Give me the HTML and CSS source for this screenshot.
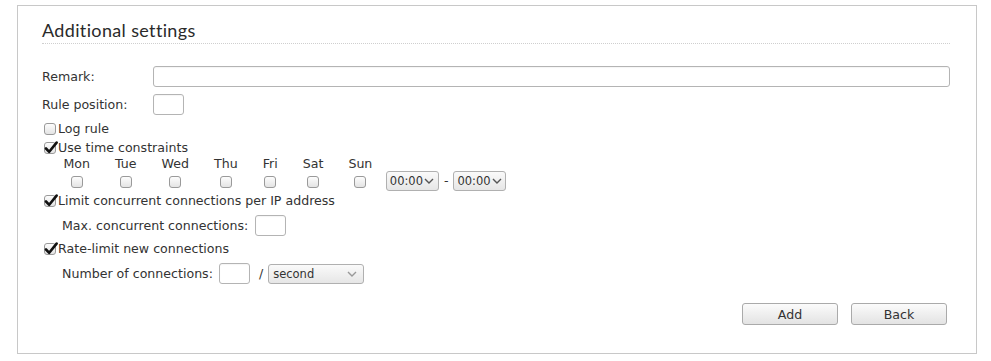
FILE: index.html
```html
<!DOCTYPE html>
<html>
<head>
<meta charset="utf-8">
<link rel="stylesheet" href="styles.css">
</head>
<body>
<div class="panel">
  <h2 class="title">Additional settings</h2>
  <div class="row field">
    <label class="lbl">Remark:</label>
    <input class="txt wide" type="text">
  </div>
  <div class="row field">
    <label class="lbl">Rule position:</label>
    <input class="txt small" type="text">
  </div>
  <div class="row check">
    <span class="cb"></span><span>Log rule</span>
  </div>
  <div class="row check">
    <span class="cb on"><svg viewBox="0 0 14 14" width="14" height="14"><path d="M2 7.5 L5.2 10.8 L12.6 1.6" fill="none" stroke="#111" stroke-width="2.6" stroke-linecap="round" stroke-linejoin="round"/></svg></span><span>Use time constraints</span>
  </div>
  <div class="days">
    <table class="daytable">
      <tr class="dnames"><td>Mon</td><td>Tue</td><td>Wed</td><td>Thu</td><td>Fri</td><td>Sat</td><td>Sun</td><td></td></tr>
      <tr class="dboxes">
        <td><span class="cb"></span></td>
        <td><span class="cb"></span></td>
        <td><span class="cb"></span></td>
        <td><span class="cb"></span></td>
        <td><span class="cb"></span></td>
        <td><span class="cb"></span></td>
        <td><span class="cb"></span></td>
        <td class="times">
          <span class="sel time">00:00<svg class="chev" viewBox="0 0 10 6" width="10" height="6"><path d="M1 1 L5 5 L9 1" fill="none" stroke="#555" stroke-width="1.4"/></svg></span>
          <span class="dash">-</span>
          <span class="sel time">00:00<svg class="chev" viewBox="0 0 10 6" width="10" height="6"><path d="M1 1 L5 5 L9 1" fill="none" stroke="#555" stroke-width="1.4"/></svg></span>
        </td>
      </tr>
    </table>
  </div>
  <div class="row check">
    <span class="cb on"><svg viewBox="0 0 14 14" width="14" height="14"><path d="M2 7.5 L5.2 10.8 L12.6 1.6" fill="none" stroke="#111" stroke-width="2.6" stroke-linecap="round" stroke-linejoin="round"/></svg></span><span>Limit concurrent connections per IP address</span>
  </div>
  <div class="row field sub">
    <label class="maxlbl">Max. concurrent connections:</label>
    <input class="txt small" type="text">
  </div>
  <div class="row check rate">
    <span class="cb on"><svg viewBox="0 0 14 14" width="14" height="14"><path d="M2 7.5 L5.2 10.8 L12.6 1.6" fill="none" stroke="#111" stroke-width="2.6" stroke-linecap="round" stroke-linejoin="round"/></svg></span><span>Rate-limit new connections</span>
  </div>
  <div class="row field sub">
    <label class="numlbl">Number of connections:</label>
    <input class="txt small" type="text">
    <span class="slash">/</span>
    <span class="sel unit">second<svg class="chev light" viewBox="0 0 10 6" width="10" height="6"><path d="M1 1 L5 5 L9 1" fill="none" stroke="#999" stroke-width="1.4"/></svg></span>
  </div>
  <div class="actions">
    <button class="btn">Add</button>
    <button class="btn">Back</button>
  </div>
</div>
</body>
</html>
```

FILE: styles.css
```css
html, body {
  margin: 0;
  padding: 0;
  background: #fff;
}
body {
  font-family: "DejaVu Sans", sans-serif;
  font-size: 12.6px;
  color: #333;
}
.panel {
  box-sizing: border-box;
  margin: 5px 0 0 17px;
  width: 960px;
  height: 349px;
  border: 1px solid #c8c8c8;
  padding: 0 26px 0 24px;
}
.title {
  margin: 0;
  padding-top: 14px;
  height: 21px;
  font-family: Lato, "Open Sans", sans-serif;
  font-weight: normal;
  font-size: 18px;
  line-height: 21px;
  color: #2a2a2a;
  border-bottom: 1px dotted #cfcfcf;
  padding-bottom: 2px;
  letter-spacing: 0.35px;
}
.row {
  display: flex;
  align-items: center;
}
.field {
  height: 21px;
  margin-top: 7px;
}
.title + .field {
  margin-top: 22px;
}
.check + .field {
  margin-top: 5px;
}
.lbl {
  width: 111px;
  flex: none;
}
.txt {
  box-sizing: border-box;
  height: 21px;
  border: 1px solid #b4b4b4;
  border-radius: 3px;
  background: #fff;
  padding: 0 4px;
  margin: 0;
  font: inherit;
  box-shadow: inset 0 1px 1px rgba(0,0,0,0.04);
}
.wide {
  flex: 1;
}
.small {
  width: 31px;
}
.check {
  height: 19px;
  padding-left: 2px;
}
.field + .check {
  margin-top: 4px;
}
.field + .check.rate {
  margin-top: 3px;
}
.cb {
  box-sizing: border-box;
  position: relative;
  display: inline-block;
  width: 12px;
  height: 12px;
  border: 1px solid #9a9a9a;
  border-radius: 3px;
  background: linear-gradient(#fdfdfd, #e4e4e4);
  margin-right: 2px;
  flex: none;
}
.cb svg {
  position: absolute;
  left: -1px;
  top: -2px;
}
.days {
  padding-left: 9px;
}
.daytable {
  border-collapse: collapse;
}
.daytable td {
  padding: 0 12.5px;
  text-align: center;
}
.dnames td {
  height: 13px;
  line-height: 13px;
  vertical-align: top;
}
.dboxes td {
  height: 21px;
  vertical-align: middle;
}
.dboxes .cb {
  margin: 0;
  vertical-align: middle;
}
.daytable td.times {
  padding: 0 0 0 1px;
  text-align: left;
  white-space: nowrap;
}
.sel {
  box-sizing: border-box;
  display: inline-flex;
  align-items: center;
  height: 20px;
  border: 1px solid #b0b0b0;
  border-radius: 3px;
  background: linear-gradient(#fafafa, #e6e6e6);
  font-size: 11.5px;
  color: #333;
  vertical-align: middle;
}
.time {
  width: 53px;
  padding-left: 3px;
}
.time .chev {
  margin-left: 1px;
}
.dash {
  display: inline-block;
  margin: 0 1px;
  vertical-align: middle;
}
.sub {
  padding-left: 20px;
}
.maxlbl {
  margin-right: 7px;
}
.numlbl {
  margin-right: 6px;
}
.slash {
  margin: 0 5px 0 9px;
}
.unit {
  width: 96px;
  padding-left: 4px;
  justify-content: space-between;
  padding-right: 6px;
}
.actions {
  display: flex;
  justify-content: flex-end;
  gap: 13px;
  margin-top: 19px;
  padding-right: 3px;
}
.btn {
  box-sizing: border-box;
  width: 96px;
  height: 22px;
  border: 1px solid #aaa;
  border-radius: 3px;
  background: linear-gradient(#fbfbfb, #e3e3e3);
  font-family: "DejaVu Sans", sans-serif;
  font-size: 12.6px;
  color: #333;
  padding: 0;
}
```
